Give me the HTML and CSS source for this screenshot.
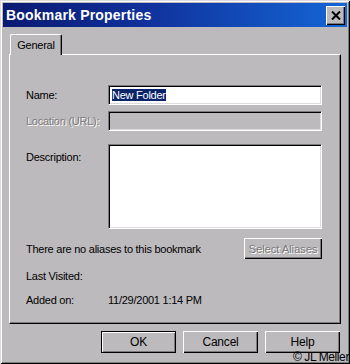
FILE: index.html
```html
<!DOCTYPE html>
<html lang="en">
<head>
    <meta charset="UTF-8">
    <title>Bookmark Properties</title>
    <link rel="stylesheet" href="styles.css">
</head>
<body>

    <div class="window">
        <!-- Title bar -->
        <div class="titlebar">
            <span class="title">Bookmark Properties</span>
            <button class="close-btn">
                <svg width="10" height="9" viewBox="0 0 10 9">
                    <path d="M1 0.5 L9 8.5 M9 0.5 L1 8.5" stroke="#000" stroke-width="2"/>
                </svg>
            </button>
        </div>

        <div class="content">
            <!-- Tabs -->
            <div class="tabs">
                <div class="tab">General</div>
            </div>

            <!-- Tab panel -->
            <div class="panel">
                <div class="row row-name">
                    <label>Name:</label>
                    <div class="field"><span class="selected">New Folder</span></div>
                </div>
                <div class="row row-location">
                    <label class="disabled">Location (URL):</label>
                    <div class="field field-disabled"></div>
                </div>
                <div class="row row-desc">
                    <label>Description:</label>
                    <div class="field field-area"></div>
                </div>
                <div class="row-aliases">
                    <span>There are no aliases to this bookmark</span>
                    <button class="btn btn-disabled">Select Aliases</button>
                </div>
                <div class="row row-info">
                    <label>Last Visited:</label>
                    <span></span>
                </div>
                <div class="row row-info row-added">
                    <label>Added on:</label>
                    <span>11/29/2001 1:14 PM</span>
                </div>
            </div>

            <!-- Dialog buttons -->
            <div class="buttons">
                <button class="btn btn-default">OK</button>
                <button class="btn">Cancel</button>
                <button class="btn">Help</button>
            </div>
        </div>

        <div class="credit">&copy; JL Meller</div>
    </div>

</body>
</html>
```

FILE: styles.css
```css
body {
    margin: 0;
    font-family: "Liberation Sans", Arial, sans-serif;
    font-size: 11px;
    letter-spacing: -0.25px;
    color: #000;
}
.window {
    position: relative;
    width: 350px;
    height: 364px;
    box-sizing: border-box;
    padding: 3px;
    overflow: hidden;
    background-color: #bdbabd;
    box-shadow: inset 1px 1px #dedbde, inset -1px -1px #000,
                inset 2px 2px #fff, inset -2px -2px #7b7b7b;
}
.titlebar {
    height: 24px;
    display: flex;
    align-items: center;
    justify-content: space-between;
    padding: 0 2px 0 3px;
    background: linear-gradient(to right, #0a1a72 0%, #10309a 40%, #1466d6 100%);
}
.title {
    color: #fff;
    font-weight: bold;
    font-size: 14px;
    letter-spacing: 0.2px;
}
.close-btn {
    width: 19px;
    height: 19px;
    padding: 0;
    border: none;
    background-color: #bdbabd;
    display: flex;
    align-items: center;
    justify-content: center;
    box-shadow: inset 1px 1px #fff, inset -1px -1px #000, inset -2px -2px #7b7b7b;
}
.content {
    padding: 7px 6px 0 6px;
}
.tabs {
    display: flex;
    padding-left: 1px;
    position: relative;
    z-index: 1;
}
.tab {
    width: 52px;
    height: 21px;
    box-sizing: border-box;
    padding-top: 4px;
    text-align: center;
    background-color: #bdbabd;
    border-top: 1px solid #fff;
    border-left: 1px solid #fff;
    border-right: 1px solid #000;
    box-shadow: inset -1px 0 #7b7b7b;
    border-radius: 2px 2px 0 0;
    margin-bottom: -1px;
}
.panel {
    height: 270px;
    box-sizing: border-box;
    padding: 30px 18px 0 16px;
    border-top: 1px solid #fff;
    border-left: 1px solid #fff;
    border-right: 1px solid #000;
    border-bottom: 1px solid #000;
    box-shadow: inset -1px -1px #7b7b7b;
}
.row {
    display: flex;
    align-items: center;
}
.row label {
    width: 82px;
    flex-shrink: 0;
    white-space: nowrap;
}
.row label.disabled {
    color: #7b7b7b;
    text-shadow: 1px 1px #fff;
}
.field {
    flex: 1;
    height: 20px;
    box-sizing: border-box;
    padding: 2px 3px;
    background-color: #fff;
    border-top: 1px solid #7b7b7b;
    border-left: 1px solid #7b7b7b;
    border-right: 1px solid #fff;
    border-bottom: 1px solid #fff;
    box-shadow: inset 1px 1px #000, inset -1px -1px #dedbde;
    line-height: 14px;
}
.selected {
    background-color: #0a246a;
    color: #fff;
}
.field-disabled {
    background-color: #bdbabd;
}
.row-location {
    margin-top: 6px;
}
.row-desc {
    margin-top: 13px;
    align-items: flex-start;
}
.row-desc label {
    margin-top: 7px;
}
.field-area {
    height: 85px;
}
.row-aliases {
    margin-top: 9px;
    display: flex;
    align-items: center;
    justify-content: space-between;
}
.row-info {
    margin-top: 10px;
    height: 14px;
}
.row-added {
    margin-top: 10px;
}
.btn {
    width: 75px;
    height: 22px;
    padding: 0;
    border: none;
    background-color: #bdbabd;
    font-family: "Liberation Sans", Arial, sans-serif;
    font-size: 12px;
    letter-spacing: -0.2px;
    color: #000;
    box-shadow: inset 1px 1px #fff, inset -1px -1px #000, inset -2px -2px #7b7b7b;
}
.btn-disabled {
    width: 78px;
    height: 21px;
    font-size: 11.5px;
    color: #7b7b7b;
    text-shadow: 1px 1px #fff;
}
.btn-default {
    box-shadow: inset 0 0 0 1px #000, inset 2px 2px #fff, inset -2px -2px #7b7b7b;
}
.buttons {
    display: flex;
    justify-content: flex-end;
    gap: 7px;
    margin-top: 7px;
    padding-right: 1px;
}
.credit {
    position: absolute;
    right: 1px;
    bottom: 1px;
    font-size: 12px;
    line-height: 12px;
    letter-spacing: -0.4px;
}
```
